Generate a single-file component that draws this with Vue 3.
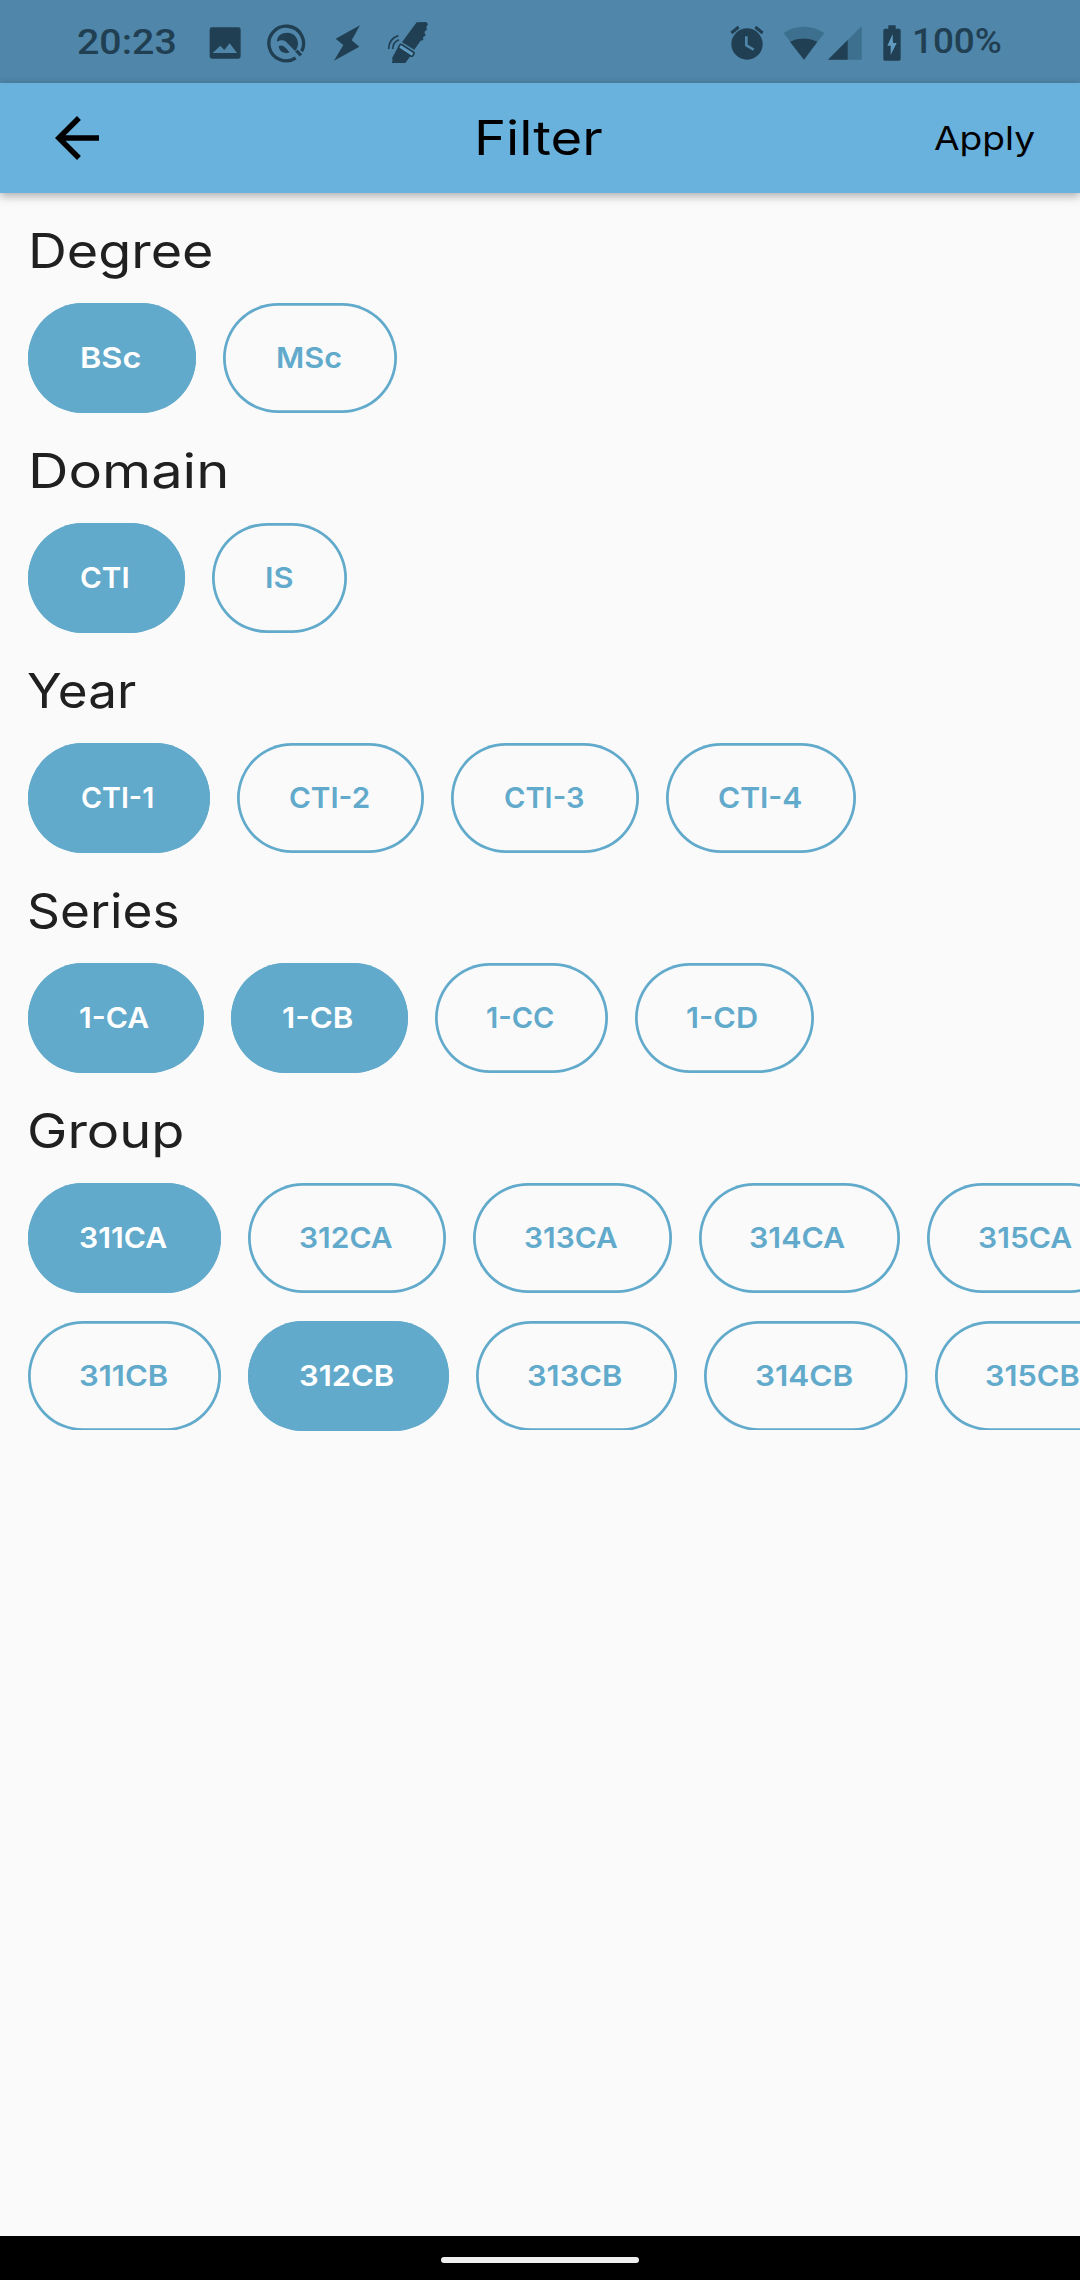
<script setup>
const sections = [
  {
    title: 'Degree', x: 32.3, ink: 178.7,
    rows: [[
      { label: 'BSc', width: 168, x: 54.5, ink: 58, selected: true },
      { label: 'MSc', width: 173.5, x: 55, ink: 63 },
    ]],
  },
  {
    title: 'Domain', x: 32.3, ink: 192.7,
    rows: [[
      { label: 'CTI', width: 157, x: 53.5, ink: 46.5, selected: true },
      { label: 'IS', width: 135, x: 55, ink: 25.5 },
    ]],
  },
  {
    title: 'Year', x: 28, ink: 107,
    rows: [[
      { label: 'CTI-1', width: 182, x: 53.5, ink: 71, selected: true },
      { label: 'CTI-2', width: 187, x: 53.5, ink: 79 },
      { label: 'CTI-3', width: 187.5, x: 53.5, ink: 78 },
      { label: 'CTI-4', width: 190, x: 53.5, ink: 82 },
    ]],
  },
  {
    title: 'Series', x: 29, ink: 148,
    rows: [[
      { label: '1-CA', width: 176, x: 52, ink: 69, selected: true },
      { label: '1-CB', width: 176.5, x: 52, ink: 69, selected: true },
      { label: '1-CC', width: 173, x: 52.5, ink: 67 },
      { label: '1-CD', width: 179, x: 53, ink: 70 },
    ]],
  },
  {
    title: 'Group', x: 29.5, ink: 152.5,
    rows: [
      [
        { label: '311CA', width: 193, x: 52, ink: 87, selected: true },
        { label: '312CA', width: 198, x: 52, ink: 92.5 },
        { label: '313CA', width: 198.5, x: 52, ink: 92.5 },
        { label: '314CA', width: 201.5, x: 52, ink: 95 },
        { label: '315CA', width: 198, x: 52, ink: 93 },
      ],
      [
        { label: '311CB', width: 193, x: 52, ink: 87 },
        { label: '312CB', width: 201, x: 52, ink: 93, selected: true },
        { label: '313CB', width: 201, x: 52, ink: 93 },
        { label: '314CB', width: 203.5, x: 52, ink: 96 },
        { label: '315CB', width: 201, x: 52, ink: 92.5 },
      ],
    ],
  },
]

const ctx = document.createElement('canvas').getContext('2d')

// Widens or narrows a label so that its visible glyphs start at x and span the given width.
function fit(text, font, x, ink) {
  ctx.font = font
  const m = ctx.measureText(text)
  const scale = ink / (m.actualBoundingBoxRight + m.actualBoundingBoxLeft)
  return {
    transform: `scaleX(${scale.toFixed(4)})`,
    marginLeft: `${(x + m.actualBoundingBoxLeft * scale).toFixed(2)}px`,
  }
}
const titleStyle = (s) => fit(s.title, '400 48px Inter', s.x, s.ink)
const chipText = (c) => fit(c.label, '600 29px Inter', c.x, c.ink)
const filterStyle = fit('Filter', '400 48px Inter', 478.5, 123)
const applyStyle = fit('Apply', '400 33px Inter', -1, 100.5)
const clockStyle = fit('20:23', '500 35px Roboto', 78.5, 96.5)
const batteryStyle = fit('100%', '500 35px Roboto', 13.5, 87)
</script>

<template>
  <div class="screen">
    <div class="status">
      <div class="clock"><span :style="clockStyle">20:23</span></div>
      <div class="notifications">
        <svg width="32" height="32" viewBox="448 83 96 96">
          <path fill="#213f52" fill-rule="evenodd" d="M457 84h79q7 0 7 7v80q0 7-7 7h-79q-7 0-7-7V91q0-7 7-7zM459 161h73l-22-29-16 20-12-13z" />
        </svg>
        <svg width="40" height="40" viewBox="620 70 120 120">
          <path d="M706 175A52 52 0 1 1 724 155" fill="none" stroke="#213f52" stroke-width="10" />
          <path d="M650 126C650 108 664 99 681 99C701 99 714 115 713 134C712 143 709 150 704 154L677 126C667 119 657 121 650 126z" fill="#213f52" />
          <path d="M655 139Q668 134 677 146L688 158Q678 163 667 158Q656 152 655 139z" fill="#213f52" />
          <path d="M708 153L722 167" stroke="#213f52" stroke-width="10" />
        </svg>
        <svg width="28" height="36" viewBox="819 78 84 108">
          <path d="M900 79L827 119L850 138L822 185L898 143L875 124z" fill="#213f52" />
        </svg>
        <svg width="42" height="44" viewBox="982 66 126 132">
          <path d="M1071 70L1099 69L1105 75L1100 84L1102 91L1094 99L1098 109L1090 115L1091 123L1082 126L1064 152L1027 130z" fill="#213f52" />
          <path d="M1014 146L1053 170L1037 192H996L999 184L997 178z" fill="#213f52" />
          <rect x="-25" y="-7" width="50" height="14" rx="5" transform="translate(1040 154) rotate(33)" fill="#5f9bc0" stroke="#213f52" stroke-width="5" />
          <path d="M1016 110Q988 119 987 150M1018 122Q1000 128 999 150" fill="none" stroke="#213f52" stroke-width="5" />
        </svg>
      </div>
      <div class="system">
        <svg class="alarm" width="34" height="36" viewBox="89 74 102 108">
          <circle cx="140" cy="131" r="47" fill="#213f52" />
          <path d="M93 98L115 80M187 98L165 80" stroke="#213f52" stroke-width="9" />
          <path d="M138 108V135L160 148" fill="none" stroke="#4f86a9" stroke-width="8" />
        </svg>
        <svg class="wifi" width="42" height="34" viewBox="249 79 126 102">
          <path d="M251 100Q311 63 373 100L312 180z" fill="#3d6f8e" />
          <path d="M270 126Q311 107 352 126L312 180z" fill="#213f52" />
        </svg>
        <svg class="signal" width="34" height="34" viewBox="385 79 102 102">
          <path d="M385 180L486 80V180z" fill="#3d6f8e" />
          <path d="M385 180L444 121V180z" fill="#213f52" />
        </svg>
        <svg class="battery" width="18" height="36" viewBox="551 76 54 108">
          <path d="M567 77H589V87H599Q604 87 604 92V178Q604 183 599 183H557Q552 183 552 178V92Q552 87 557 87H567z" fill="#213f52" />
          <path d="M580 103L564 138H574V166L592 130H581z" fill="#6099bd" />
        </svg>
        <span :style="batteryStyle">100%</span>
      </div>
    </div>

    <header class="bar">
      <svg class="back" width="66" height="66" viewBox="0 0 24 24">
        <path d="M20 11H7.83l5.59-5.59L12 4l-8 8 8 8 1.41-1.41L7.83 13H20z" />
      </svg>
      <h1><span :style="filterStyle">Filter</span></h1>
      <div class="apply"><span :style="applyStyle">Apply</span></div>
    </header>

    <main>
      <section v-for="s in sections" :key="s.title">
        <h2><span :style="titleStyle(s)">{{ s.title }}</span></h2>
        <div class="rows">
          <div v-for="(row, i) in s.rows" :key="i" class="row">
            <div
              v-for="c in row"
              :key="c.label"
              class="chip"
              :class="{ selected: c.selected, last: i === 1 }"
              :style="{ width: c.width + 'px' }"
            >
              <span :style="chipText(c)">{{ c.label }}</span>
            </div>
          </div>
        </div>
      </section>
    </main>

    <footer><div class="handle"></div></footer>
  </div>
</template>

<style>
body {
  margin: 0;
  background: #fafafa;
}
</style>

<style scoped>
.screen {
  width: 1080px;
  height: 2280px;
  display: flex;
  flex-direction: column;
  overflow: hidden;
  background: #fafafa;
  font-family: Inter, "Open Sans", sans-serif;
}
svg {
  display: block;
  flex: none;
}
span {
  display: inline-block;
  white-space: nowrap;
  transform-origin: left center;
}
.status {
  flex: none;
  height: 83px;
  display: flex;
  background: #4f86a9;
  color: #213f52;
  font: 500 35px/85px Roboto, sans-serif;
}
.clock {
  width: 209px;
}
.notifications {
  display: flex;
  align-items: center;
  padding-top: 3px;
  height: 80px;
  gap: 26px;
}
.system {
  display: flex;
  align-items: center;
  margin-left: auto;
  width: 350px;
}
.alarm {
  margin-top: 2px;
}
.wifi {
  margin: 3px 3px 0 19px;
}
.signal {
  margin-top: 3px;
}
.battery {
  margin: 3px 0 0 21px;
}
.bar {
  flex: none;
  position: relative;
  height: 110px;
  display: flex;
  align-items: center;
  background: #6ab2de;
  box-shadow: 0 3px 9px rgba(0, 0, 0, 0.32);
  color: #000;
}
.back {
  margin-left: 44px;
}
h1 {
  margin: 0 0 0 -110px;
  width: 935px;
  font-size: 48px;
  font-weight: 400;
  line-height: 110px;
}
.apply {
  font-size: 33px;
  font-weight: 400;
}
main {
  flex: 1;
}
h2 {
  margin: 0;
  padding-top: 5px;
  font-size: 48px;
  font-weight: 400;
  line-height: 105px;
  height: 105px;
  color: #202020;
}
.rows {
  display: flex;
  flex-direction: column;
  gap: 28px;
  padding-left: 28px;
}
.row {
  display: flex;
  gap: 27px;
}
.chip {
  flex: none;
  box-sizing: border-box;
  height: 110px;
  line-height: 110px;
  border-radius: 55px;
  box-shadow: inset 0 0 0 2.75px #62aacb;
  color: #62aacb;
  font-size: 29px;
  font-weight: 600;
}
.chip.last:not(.selected) {
  clip-path: inset(0 0 1px 0);
}
.chip.selected {
  background: #62aacb;
  color: #fff;
}
footer {
  flex: none;
  height: 44px;
  display: flex;
  align-items: center;
  justify-content: center;
  background: #000;
}
.handle {
  width: 198px;
  height: 6px;
  margin-top: 4px;
  border-radius: 3px;
  background: #eee;
}
</style>
